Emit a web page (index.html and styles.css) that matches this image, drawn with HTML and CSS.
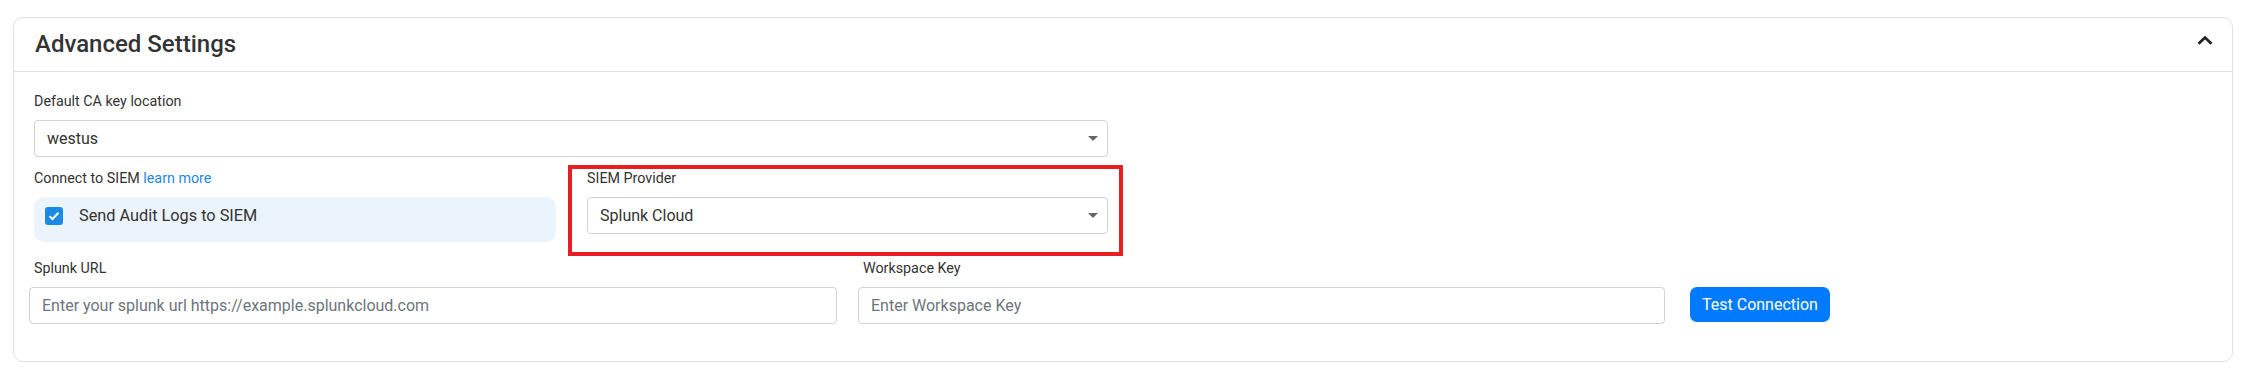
FILE: index.html
```html
<!DOCTYPE html>
<html lang="en">
<head>
<meta charset="utf-8">
<title>Advanced Settings</title>
<link rel="stylesheet" href="styles.css">
</head>
<body>
<div class="page">
  <section class="card">
    <header class="card-header">
      <h2 class="card-title">Advanced Settings</h2>
      <button class="collapse-btn" type="button" aria-label="Collapse">
        <svg width="16" height="9" viewBox="0 0 16 9"><polyline points="1.5,7.8 8,1.6 14.5,7.8" fill="none" stroke="#222" stroke-width="2.8"/></svg>
      </button>
    </header>
    <div class="card-body">
      <div class="field field-wide">
        <div class="field-label">Default CA key location</div>
        <div class="select"><span class="select-value">westus</span><span class="caret"></span></div>
      </div>

      <div class="row-two">
        <div class="field">
          <div class="field-label">Connect to SIEM <a class="link" href="#">learn more</a></div>
          <div class="check-panel">
            <span class="checkbox">
              <svg width="12" height="10" viewBox="0 0 12 10"><polyline points="1.5,5.2 4.5,8 10.5,1.8" fill="none" stroke="#fff" stroke-width="2"/></svg>
            </span>
            <span class="check-text">Send Audit Logs to SIEM</span>
          </div>
        </div>
        <div class="field highlighted">
          <div class="field-label">SIEM Provider</div>
          <div class="select"><span class="select-value">Splunk Cloud</span><span class="caret"></span></div>
        </div>
      </div>

      <div class="row-three">
        <div class="field field-url">
          <div class="field-label">Splunk URL</div>
          <div class="input placeholder">Enter your splunk url https://example.splunkcloud.com</div>
        </div>
        <div class="field field-key">
          <div class="field-label">Workspace Key</div>
          <div class="input placeholder">Enter Workspace Key</div>
        </div>
        <div class="field field-action">
          <button class="btn-primary" type="button">Test Connection</button>
        </div>
      </div>
    </div>
  </section>
</div>
</body>
</html>
```
FILE: styles.css
```css
* { box-sizing: border-box; }
html, body { margin: 0; padding: 0; background: #fff; }
body {
  font-family: Roboto, "Liberation Sans", Arial, sans-serif;
  color: #333;
}
.page {
  padding: 17px 16px 0 13px;
}
.card {
  border: 1px solid #dee2e6;
  border-radius: 10px;
  background: #fff;
}
.card-header {
  display: flex;
  justify-content: space-between;
  align-items: flex-start;
  padding: 12px 19px 12px 21px;
  border-bottom: 1px solid #dee2e6;
}
.card-title {
  margin: 0;
  font-size: 24px;
  line-height: 29px;
  font-weight: 500;
  color: #333;
}
.collapse-btn {
  margin: 6px 0 0 0;
  padding: 0;
  border: 0;
  background: none;
  display: block;
  line-height: 0;
}
.card-body {
  padding: 19px 20px 37px 20px;
}
.field-wide { width: 1074px; }
.field-label {
  font-size: 14.3px;
  line-height: 20px;
  margin-bottom: 9px;
  color: #333;
  white-space: nowrap;
}
.link {
  color: #1e88e5;
  text-decoration: none;
}
.select, .input {
  height: 37px;
  border: 1px solid #ced4da;
  border-radius: 4px;
  display: flex;
  align-items: center;
  font-size: 16px;
  background: #fff;
}
.select {
  justify-content: space-between;
  padding: 0 9px 0 12px;
  color: #333;
}
.caret {
  width: 0;
  height: 0;
  border-left: 5px solid transparent;
  border-right: 5px solid transparent;
  border-top: 5px solid #666;
}
.input {
  padding: 0 12px;
  white-space: nowrap;
  overflow: hidden;
}
.placeholder { color: #6c757d; }

.row-two {
  margin-top: 11px;
  width: 1074px;
  display: grid;
  grid-template-columns: 522px 521px;
  column-gap: 31px;
}
.check-panel {
  height: 45px;
  background: #ebf4fc;
  border-radius: 10px;
  display: flex;
  align-items: flex-start;
  padding: 10px 0 0 11px;
}
.checkbox {
  width: 18px;
  height: 18px;
  border-radius: 3px;
  background: #1a8ae4;
  display: flex;
  align-items: center;
  justify-content: center;
  flex: none;
}
.check-text {
  margin-left: 16px;
  font-size: 16.3px;
  line-height: 18px;
  color: #333;
}
.highlighted { position: relative; }
.highlighted::after {
  content: "";
  position: absolute;
  top: -3px;
  left: -19px;
  right: -15px;
  bottom: -14px;
  border: 4px solid #e81e25;
  pointer-events: none;
}

.row-three {
  margin-top: 16px;
  margin-left: -5px;
  display: flex;
  align-items: flex-start;
}
.row-three .field-label { padding-left: 5px; }
.field-url { width: 808px; margin-right: 21px; }
.field-key { width: 807px; margin-right: 25px; }
.field-action { padding-top: 29px; }
.btn-primary {
  height: 35px;
  padding: 0 12px;
  border: 0;
  border-radius: 7px;
  background: #007bff;
  color: #fff;
  font-family: Roboto, "Liberation Sans", Arial, sans-serif;
  font-size: 16px;
  line-height: 35px;
  white-space: nowrap;
}
```
